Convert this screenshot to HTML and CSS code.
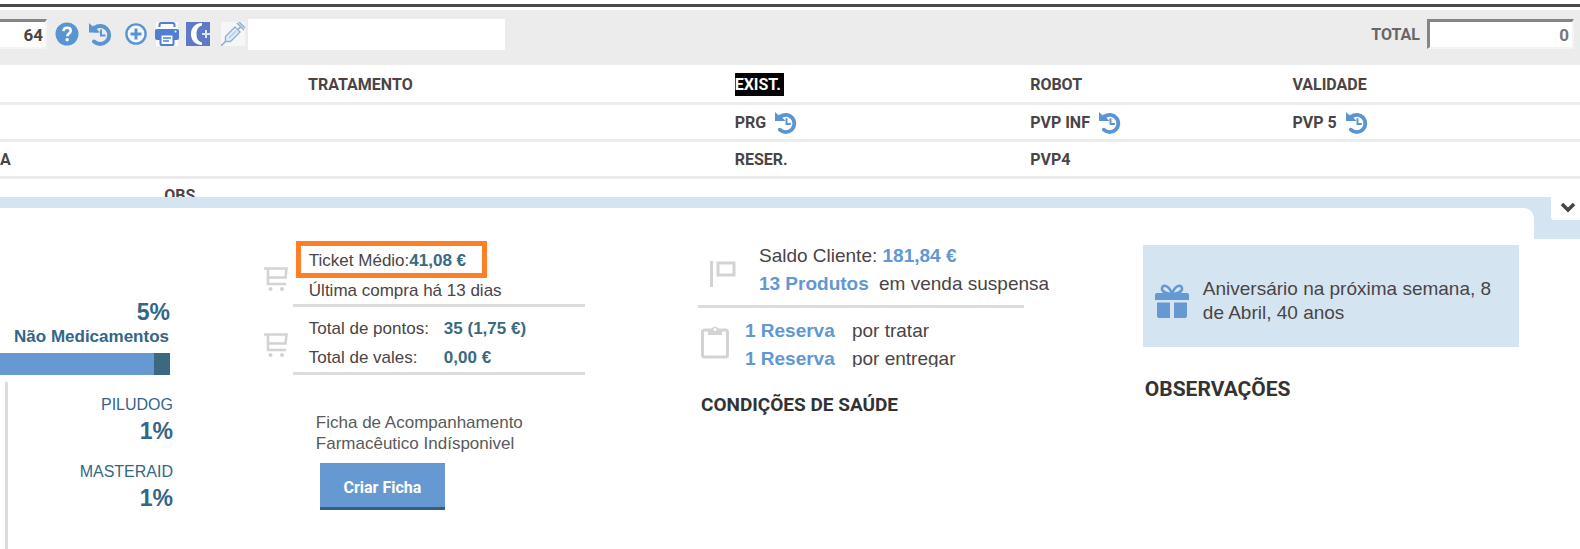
FILE: index.html
```html
<!DOCTYPE html>
<html lang="pt">
<head>
    <meta charset="UTF-8">
    <meta name="viewport" content="width=device-width, initial-scale=1.0">
    <title>Ficha de Cliente</title>
    <link rel="stylesheet" href="styles.css">
</head>
<body>
    <!-- Shared icons -->
    <svg class="sprite" aria-hidden="true">
        <symbol id="icon-history" viewBox="0 0 24 24">
            <path d="M5.500 6A9 9 0 1 1 5 19.500" fill="none" stroke="#5b95d1" stroke-width="4" stroke-linecap="round"/>
            <path d="M0 1l10 9.500H0z" fill="#5b95d1"/>
            <path d="M4 3l7 7.500H4z" fill="#5b95d1"/>
            <path d="M12 7.500v6h4.500" fill="none" stroke="#5b95d1" stroke-width="2"/>
        </symbol>
        <symbol id="icon-cart" viewBox="0 0 24 24">
            <path d="M0 1.500h22.500l-1 9H4M4 1.500v15.500H22" fill="none" stroke="#d3d3d3" stroke-width="2.600"/>
            <circle cx="6.500" cy="22" r="2" fill="#d3d3d3"/>
            <circle cx="18" cy="22" r="2" fill="#d3d3d3"/>
        </symbol>
    </svg>

    <!-- Toolbar -->
    <div class="toolbar">
        <input type="text" class="field code" value="64" aria-label="Código">
        <div class="tools">
            <button class="tool" aria-label="Ajuda">
                <svg viewBox="0 0 24 24"><circle cx="12" cy="12" r="11.500" fill="#5b95d1"/><path d="M8.300 9.200c.2-2.300 1.700-3.500 3.800-3.500 2.200 0 3.700 1.200 3.700 3.100 0 2.700-3.500 2.700-3.500 5.400" fill="none" stroke="#fff" stroke-width="2.600"/><circle cx="12.200" cy="17.700" r="1.700" fill="#fff"/></svg>
            </button>
            <button class="tool" aria-label="Histórico"><svg><use href="#icon-history"/></svg></button>
            <button class="tool" aria-label="Adicionar">
                <svg viewBox="0 0 24 24"><circle cx="12" cy="12" r="9.600" fill="#f4f8fc" stroke="#5b95d1" stroke-width="2.400"/><path d="M12 6.500v11M6.500 12h11" stroke="#5b95d1" stroke-width="3"/></svg>
            </button>
            <button class="tool" aria-label="Imprimir">
                <svg viewBox="0 0 24 24"><path d="M1 0h22v24H1z" fill="#fbfcfe"/><path d="M4.500 5V3q0-2 2-2h11q2 0 2 2v2" fill="none" stroke="#4f7fd0" stroke-width="2"/><rect y="7" width="24" height="11" rx="2" fill="#4f7fd0"/><circle cx="20.500" cy="9.500" r="1" fill="#fff"/><path d="M5.500 12.500h13V22q0 1-1 1h-11q-1 0-1-1z" fill="#fff" stroke="#4f7fd0" stroke-width="2"/><path d="M8 16h8M8 19h6" stroke="#4f7fd0" stroke-width="1.400"/></svg>
            </button>
            <button class="tool" aria-label="Modo noturno">
                <svg viewBox="0 0 24 24"><path d="M0 0h24v24H0z" fill="#6079c4"/><path d="M16 1C8 1 5 7 5 12s3 11 11 11v-2.500c-4-1-5.500-4.500-5.500-8.500S12 4.500 16 3.500z" fill="#fff"/><path d="M20 8v8M16 12h8" stroke="#dfe5f4" stroke-width="2"/></svg>
            </button>
            <button class="tool" aria-label="Vacina">
                <svg viewBox="0 0 24 24"><path d="M0 0h24v24H0z" fill="#f5f6f7"/><path d="M0 24l5-5M16 1l7 7M20 4.500L16 8.500M18 0l6 6" stroke="#92b1ce" stroke-width="1.600"/><path d="M4.500 14.500L14 5l5 5-9.500 9.500H4.500z" fill="#e3edf6" stroke="#92b1ce" stroke-width="1.400"/><path d="M8 16l7-7" stroke="#b4cae0" stroke-width="1.400"/></svg>
            </button>
        </div>
        <input type="text" class="search" aria-label="Pesquisar">
        <label class="total-label" for="total">TOTAL</label>
        <input type="text" class="field total" id="total" value="0">
    </div>

    <!-- Product details -->
    <div class="details">
        <div class="details-row first">
            <span></span>
            <span></span>
            <span>TRATAMENTO</span>
            <span><mark>EXIST.</mark></span>
            <span>ROBOT</span>
            <span>VALIDADE</span>
        </div>
        <div class="details-row">
            <span></span>
            <span></span>
            <span></span>
            <span class="with-icon">PRG <svg><use href="#icon-history"/></svg></span>
            <span class="with-icon">PVP INF <svg><use href="#icon-history"/></svg></span>
            <span class="with-icon">PVP 5 <svg><use href="#icon-history"/></svg></span>
        </div>
        <div class="details-row">
            <span>A</span>
            <span></span>
            <span></span>
            <span>RESER.</span>
            <span>PVP4</span>
            <span></span>
        </div>
        <div class="details-row cut">
            <span></span>
            <span>OBS</span>
        </div>
    </div>

    <!-- Customer drawer -->
    <div class="drawer">
        <div class="panel">
            <div class="stats">
                <div class="percent">5%</div>
                <div class="stats-title">Não Medicamentos</div>
                <div class="bar"><div class="bar-rest"></div></div>
                <div class="brands">
                    <div class="brand">PILUDOG</div>
                    <div class="percent">1%</div>
                    <div class="brand next">MASTERAID</div>
                    <div class="percent">1%</div>
                </div>
            </div>

            <div class="purchases">
                <div class="purchase">
                    <svg class="cart"><use href="#icon-cart"/></svg>
                    <div class="purchase-text">
                        <div class="ticket">Ticket Médio:<b>41,08 €</b></div>
                        <div class="last">Última compra há 13 dias</div>
                    </div>
                </div>
                <div class="purchase points">
                    <svg class="cart"><use href="#icon-cart"/></svg>
                    <div class="purchase-text">
                        <div class="pair"><span>Total de pontos:</span><b>35 (1,75 €)</b></div>
                        <div class="pair"><span>Total de vales:</span><b>0,00 €</b></div>
                    </div>
                </div>
                <div class="record">
                    <p>Ficha de Acompanhamento<br>Farmacêutico Indísponivel</p>
                    <button class="create">Criar Ficha</button>
                </div>
            </div>

            <div class="account">
                <div class="balance">
                    <svg class="flag" viewBox="0 0 26 26"><path d="M1.500 0v26" stroke="#d3d3d3" stroke-width="3"/><path d="M8 2h16v12H8z" fill="none" stroke="#d3d3d3" stroke-width="3"/></svg>
                    <div>
                        <div>Saldo Cliente: <b>181,84 €</b></div>
                        <div><a href="#">13 Produtos</a> <span class="after">em venda suspensa</span></div>
                    </div>
                </div>
                <div class="reserves">
                    <svg class="clipboard" viewBox="0 0 28 34"><rect x="1.500" y="5" width="25" height="27" rx="2" fill="none" stroke="#d3d3d3" stroke-width="3"/><path d="M7 4h3.500a3.800 3.800 0 0 1 7 0H21v6H7z" fill="#d3d3d3"/><circle cx="14" cy="4.500" r="1.500" fill="#fff"/></svg>
                    <div class="reserve-list">
                        <div><a href="#">1 Reserva</a><span>por tratar</span></div>
                        <div><a href="#">1 Reserva</a><span>por entregar</span></div>
                    </div>
                </div>
                <h2>CONDIÇÕES DE SAÚDE</h2>
            </div>

            <div class="notes">
                <div class="birthday">
                    <svg class="gift" viewBox="0 0 34 34"><path d="M17 10C13 10 6 8 7 4s7-3 10 6c3-9 9-10 10-6s-6 6-10 6z" fill="none" stroke="#6699d1" stroke-width="2.500"/><path d="M2 9h30q2 0 2 2v5H0v-5q0-2 2-2zM2 18.500h13V34H4q-2 0-2-2zM19 18.500H32V32q0 2-2 2H19z" fill="#6699d1"/></svg>
                    <p>Aniversário na próxima semana, 8 de Abril, 40 anos</p>
                </div>
                <h2>OBSERVAÇÕES</h2>
            </div>
        </div>
        <button class="toggle" aria-label="Recolher">
            <svg viewBox="0 0 16 12"><path d="M2 3l6 6 6-6" fill="none" stroke="#444" stroke-width="3.500"/></svg>
        </button>
    </div>
</body>
</html>
```
FILE: styles.css
```css
* {
    box-sizing: border-box;
}
body {
    margin: 0;
    padding-top: 4px;
    background-color: #fff;
    color: #4a4446;
    font-family: "Liberation Sans", Arial, sans-serif;
    font-size: 17px;
    overflow: hidden;
}
p, h2 {
    margin: 0;
}
button {
    border: none;
    padding: 0;
    background: none;
    font-family: inherit;
    cursor: pointer;
}
a {
    color: #6197d3;
    font-weight: bold;
    text-decoration: none;
}
.sprite {
    display: none;
}

/* Toolbar */
.toolbar {
    display: flex;
    align-items: center;
    height: 61px;
    padding: 0 6px 4px 0;
    border-top: 3px solid #4a4a4a;
    background: linear-gradient(#fff 3px, #ececec 3px);
}
.field {
    height: 30px;
    padding: 0 3px;
    border: solid #f4f4f4;
    border-width: 3px 2px 2px 3px;
    border-top-color: #858585;
    border-left-color: #858585;
    background-color: #fff;
    color: #4a4446;
    font-family: Roboto, "Liberation Sans", sans-serif;
    font-size: 17px;
    font-weight: bold;
    text-align: right;
}
.code {
    width: 47px;
    border-left: none;
    padding-right: 2px;
}
.tools {
    display: flex;
    gap: 7px;
    margin-left: 8px;
}
.tool, .tool svg {
    display: block;
    width: 24px;
    height: 24px;
}
.tool:nth-child(2) {
    margin: 0 4px 0 3px;
}
.tool:nth-child(6) {
    margin-left: 4px;
}
.search {
    width: 257px;
    height: 31px;
    margin-left: 3px;
    border: none;
    background-color: #fff;
}
.total-label {
    margin-left: auto;
    margin-right: 7px;
    color: #666;
    font-family: Roboto, "Liberation Sans", sans-serif;
    font-size: 16px;
    font-weight: bold;
}
.total {
    width: 147px;
    color: #777;
}

/* Product details */
.details {
    padding-top: 2px;
    font-family: Roboto, "Liberation Sans", sans-serif;
    font-size: 16px;
    font-weight: bold;
}
.details-row {
    display: grid;
    grid-template-columns: 10.4% 9.1% 27% 18.7% 16.6% 1fr;
    align-items: center;
    height: 37px;
    border-bottom: 3px solid #ececec;
}
.first {
    height: 38px;
}
.details-row mark {
    padding: 2px 3px 2px 0;
    background-color: #000;
    color: #fff;
}
.with-icon {
    display: flex;
    align-items: center;
    gap: 9px;
}
.with-icon svg {
    width: 23px;
    height: 23px;
}
.cut {
    align-items: start;
    height: 18px;
    padding-top: 7px;
    border-bottom: none;
    overflow: hidden;
}

/* Customer drawer */
.drawer {
    display: flex;
    align-items: flex-start;
    background: linear-gradient(#d5e4f1 42px, #fff 42px);
}
.panel {
    flex: 1;
    display: grid;
    grid-template-columns: 17.2% 28.3% 29% 24.5%;
    min-height: 341px;
    margin-top: 11px;
    margin-right: 17px;
    border-top-right-radius: 10px;
    background-color: #fff;
}
.toggle {
    display: flex;
    align-items: center;
    justify-content: center;
    width: 29px;
    height: 23px;
    padding-left: 4px;
    padding-bottom: 3px;
    border-bottom-left-radius: 3px;
    background-color: #fff;
}
.toggle svg {
    width: 16px;
    height: 12px;
}

/* Share by product type */
.stats {
    width: 170px;
    padding-top: 91px;
    color: #336688;
    text-align: right;
}
.percent {
    font-size: 23px;
    font-weight: bold;
    line-height: 26px;
}
.stats-title {
    padding-right: 1px;
    font-weight: bold;
    line-height: 24px;
    white-space: nowrap;
}
.bar {
    display: flex;
    justify-content: flex-end;
    height: 22px;
    margin-top: 4px;
    background-color: #6699d1;
}
.bar-rest {
    width: 16px;
    background-color: #3c6880;
}
.brands {
    height: 167px;
    margin: 7px -3px 0 5px;
    padding-top: 10px;
    border-left: 3px solid #dcdcdc;
}
.brand {
    font-size: 16px;
    line-height: 26px;
}
.next {
    margin-top: 15px;
}

/* Purchases and points */
.purchases {
    padding-top: 33px;
    line-height: 29px;
}
.purchases b {
    color: #3a6a82;
}
.purchase {
    display: flex;
    gap: 5px;
}
.cart {
    width: 24px;
    height: 24px;
    margin-top: 26px;
}
.purchase-text {
    width: 292px;
    padding-left: 16px;
    border-bottom: 3px solid #dcdcdc;
}
.ticket {
    width: 191px;
    height: 37px;
    margin-left: -13px;
    padding-left: 8px;
    border: 5px solid #ff7f27;
    line-height: 29px;
}
.last {
    line-height: 26px;
}
.points .purchase-text {
    padding-top: 7px;
}
.pair {
    display: grid;
    grid-template-columns: 135px 1fr;
}
.record {
    padding: 37px 0 0 52px;
}
.record p {
    line-height: 21px;
    color: #5a5a5a;
}
.create {
    width: 125px;
    height: 47px;
    margin: 9px 0 0 4px;
    padding-top: 5px;
    border-bottom: 3px solid #336080;
    background-color: #6699d1;
    color: #fff;
    font-family: Roboto, "Liberation Sans", sans-serif;
    font-size: 16px;
    font-weight: bold;
}

/* Account and reserves */
.account {
    padding-top: 34px;
    font-size: 19px;
    line-height: 28px;
}
.account b {
    color: #6197d3;
}
.balance {
    display: flex;
    gap: 23px;
    width: 326px;
    padding: 0 0 7px 12px;
    border-bottom: 3px solid #dcdcdc;
    white-space: nowrap;
}
.flag {
    flex: none;
    width: 26px;
    height: 26px;
    margin-top: 19px;
}
.after {
    margin-left: 5px;
}
.reserves {
    display: flex;
    gap: 16px;
    height: 59px;
    padding: 9px 0 0 3px;
    overflow: hidden;
}
.clipboard {
    width: 28px;
    height: 34px;
    margin-top: 8px;
}
.reserve-list > div {
    display: grid;
    grid-template-columns: 107px auto;
    height: 28px;
}
h2 {
    color: #333;
    font-family: Roboto, "Liberation Sans", sans-serif;
    font-size: 19px;
    line-height: 28px;
}
.account h2 {
    padding: 24px 0 0 3px;
}

/* Birthday and notes */
.notes {
    padding-top: 37px;
}
.birthday {
    display: flex;
    align-items: center;
    gap: 14px;
    height: 102px;
    padding: 10px 20px 0 12px;
    background-color: #d5e4f1;
    font-size: 19px;
    line-height: 24px;
}
.gift {
    flex: none;
    width: 34px;
    height: 34px;
}
.notes h2 {
    padding: 28px 0 0 2px;
    font-size: 21px;
}
```
